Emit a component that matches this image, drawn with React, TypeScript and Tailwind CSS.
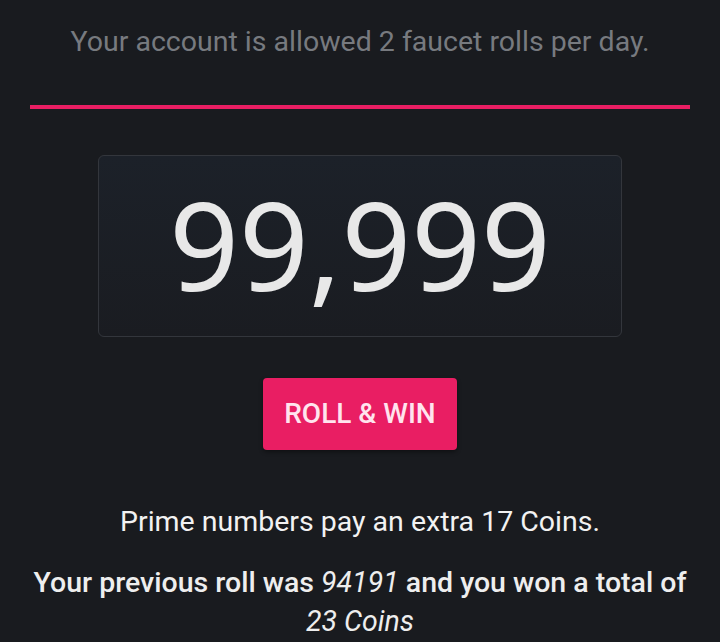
export default function App() {
  return (
    <div className="min-h-[642px] w-[720px] bg-[#191b1f] overflow-hidden font-['Roboto',sans-serif] text-center">
      <p className="pt-[24px] text-[28.5px] leading-[36px] text-[#777a7f]">
        Your account is allowed 2 faucet rolls per day.
      </p>

      <div className="mx-[30px] mt-[45px] h-[4px] bg-[#e91e63]" />

      <div className="mx-auto mt-[46px] flex h-[182px] w-[524px] items-center justify-center rounded-md border border-[#33363c] bg-gradient-to-b from-[#1c2129] to-[#1a1c21]">
        <span className="font-['Noto_Sans',sans-serif] text-[122px] leading-none text-[#e8e8e8] -mt-[4px]">
          99,999
        </span>
      </div>

      <button className="mx-auto mt-[41px] flex h-[72px] w-[194px] items-center justify-center rounded bg-[#e91e63] text-[28px] font-medium text-[#ffe4ee] shadow-[0_2px_4px_rgba(0,0,0,0.4)]">
        ROLL &amp; WIN
      </button>

      <p className="mt-[54px] text-[28.5px] leading-[36px] text-[#f2f2f2]">
        Prime numbers pay an extra 17 Coins.
      </p>
      <p className="mt-[23px] text-[28.5px] leading-[39px] font-medium text-[#eeeeee] px-[20px]">
        Your previous roll was <i className="font-normal">94191</i> and you won a total of{" "}
        <i className="font-normal">23 Coins</i>
      </p>
    </div>
  );
}
